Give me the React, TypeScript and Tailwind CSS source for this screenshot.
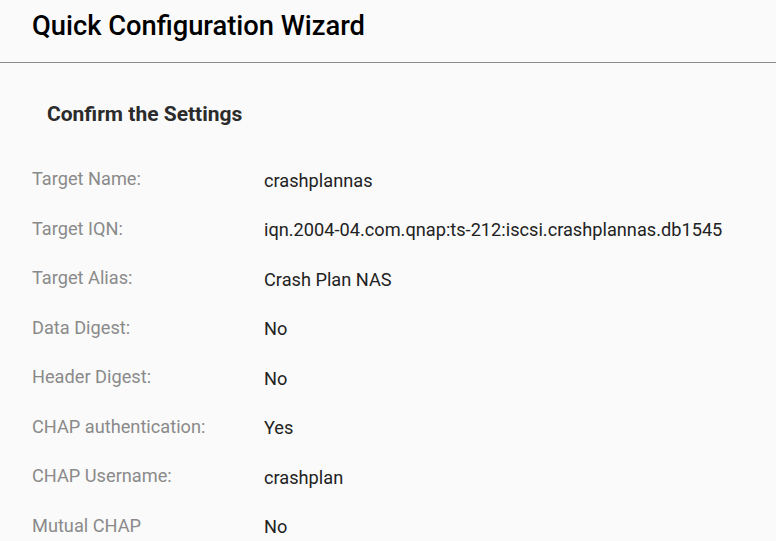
const rows = [
  { label: "Target Name:", value: "crashplannas" },
  { label: "Target IQN:", value: "iqn.2004-04.com.qnap:ts-212:iscsi.crashplannas.db1545" },
  { label: "Target Alias:", value: "Crash Plan NAS" },
  { label: "Data Digest:", value: "No" },
  { label: "Header Digest:", value: "No" },
  { label: "CHAP authentication:", value: "Yes" },
  { label: "CHAP Username:", value: "crashplan" },
  { label: "Mutual CHAP", value: "No" },
];

export default function App() {
  return (
    <div className="w-[776px] h-[541px] overflow-hidden bg-[#fafafa] font-['Roboto',sans-serif]">
      {/* Header */}
      <div className="h-[63px] border-b border-[#8c8c8c] pl-8 pt-[10px]">
        <h1 className="text-[27.3px] leading-[32px] font-medium text-black">Quick Configuration Wizard</h1>
      </div>

      <div className="pt-[37px]">
        <h2 className="pl-[47px] text-[21px] leading-[28px] font-bold text-[#2b2b2b]">
          Confirm the Settings
        </h2>

        <div className="mt-[39px] pl-8">
          {rows.map(({ label, value }) => (
            <div key={label} className="flex h-[49.5px]">
              <div className="w-[232px] text-[18.2px] leading-[24px] text-[#8a8a8a]">{label}</div>
              <div className="pt-[1.5px] text-[18.2px] leading-[24px] text-[#222]">{value}</div>
            </div>
          ))}
        </div>
      </div>
    </div>
  );
}
